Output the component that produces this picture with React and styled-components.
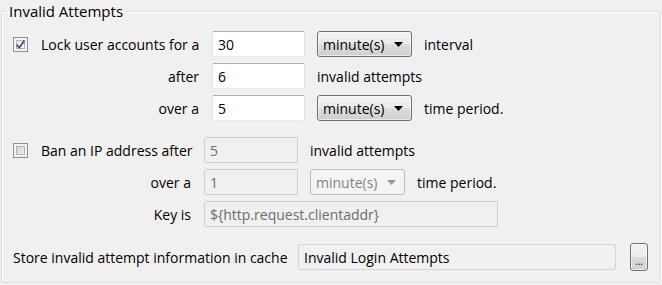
import React from 'react'
import styled, { createGlobalStyle } from 'styled-components'

const GlobalStyle = createGlobalStyle`
	body {
		margin: 0;
		background: #f0f0f0;
		font-family: "Open Sans", "Noto Sans", sans-serif;
		font-size: 14px;
		color: #000;
	}
`

const Check = ({ checked }) => (
	<CheckBox $checked={checked}>
		{checked && (
			<svg width="15" height="15" viewBox="0 0 15 15">
				<path d="M3.6 7.6 L6.2 10.8 L11.4 3.6" fill="none" stroke="#40569a" strokeWidth="1.8" strokeLinejoin="round" />
			</svg>
		)}
	</CheckBox>
)

const Dropdown = ({ disabled }) => (
	<Select $disabled={disabled}>
		<span>minute(s)</span>
		<svg width="9" height="5" viewBox="0 0 9 5">
			<path d="M0 0 H9 L4.5 5 Z" fill={disabled ? '#9a9a9a' : '#000'} />
		</svg>
	</Select>
)

const App = () => {
	return (
		<>
			<GlobalStyle />
			<Group>
				<Legend>Invalid Attempts</Legend>
				<Body>
					<LockGrid>
						<CheckLabel>
							<Check checked />
							Lock user accounts for a
						</CheckLabel>
						<Field defaultValue="30" />
						<Dropdown />
						<Text>interval</Text>

						<RightLabel>after</RightLabel>
						<Field defaultValue="6" />
						<Text $span>invalid attempts</Text>

						<RightLabel>over a</RightLabel>
						<Field defaultValue="5" />
						<Dropdown />
						<Text>time period.</Text>
					</LockGrid>

					<BanGrid>
						<CheckLabel>
							<Check />
							Ban an IP address after
						</CheckLabel>
						<Field defaultValue="5" disabled />
						<Text $span>invalid attempts</Text>

						<RightLabel>over a</RightLabel>
						<Field defaultValue="1" disabled />
						<Dropdown disabled />
						<Text>time period.</Text>

						<RightLabel>Key is</RightLabel>
						<KeyField defaultValue="${http.request.clientaddr}" disabled />
					</BanGrid>

					<CacheRow>
						<Text>Store invalid attempt information in cache</Text>
						<Field defaultValue="Invalid Login Attempts" readOnly />
						<BrowseButton>...</BrowseButton>
					</CacheRow>
				</Body>
			</Group>
		</>
	)
}

export default App

const Group = styled.fieldset`
	margin: 1px 1px 0;
	padding: 10px 0 11px;
	border: 1px solid #d5dfe5;
	border-radius: 3px;
	box-shadow: inset 1px 1px 0 #fff, 1px 1px 0 #fff;
	min-width: 0;
`

const Legend = styled.legend`
	margin-left: 5px;
	padding: 0 2px;
	line-height: 20px;
	font-size: 15px;
`

const Body = styled.div`
	padding: 0 11px;
`

const LockGrid = styled.div`
	display: grid;
	grid-template-columns: 187px 93px 95px auto;
	grid-auto-rows: 26px;
	column-gap: 12px;
	row-gap: 6px;
	align-items: center;
`

const BanGrid = styled(LockGrid)`
	margin-top: 16px;
	grid-template-columns: 179px 94px 95px auto;
`

const CacheRow = styled.div`
	margin-top: 16px;
	display: grid;
	grid-template-columns: 273px 318px 20px;
	column-gap: 12px;
	height: 28px;
	align-items: center;
`

const Text = styled.span`
	white-space: nowrap;
	grid-column: ${p => (p.$span ? 'span 2' : 'auto')};
`

const RightLabel = styled.span`
	justify-self: end;
	padding-right: 1px;
	white-space: nowrap;
`

const CheckLabel = styled.label`
	display: flex;
	align-items: center;
	gap: 13px;
	white-space: nowrap;
`

const CheckBox = styled.span`
	box-sizing: border-box;
	width: 15px;
	height: 15px;
	border: 1px solid #8e8f8f;
	background: ${p => (p.$checked
		? 'linear-gradient(135deg, #e9e9e9, #fdfdfd)'
		: 'linear-gradient(135deg, #cdcdcd, #f7f7f7)')};
	box-shadow: inset 0 0 0 2px #f4f4f4, inset 0 0 0 3px #b4b4b4;
	position: relative;
	flex: none;

	svg {
		position: absolute;
		left: -1px;
		top: -1px;
	}
`

const Field = styled.input`
	box-sizing: border-box;
	width: 100%;
	height: 26px;
	margin: 0;
	padding: 0 5px;
	border: 1px solid;
	border-color: #abadb3 #dbdfe6 #e3e9ef #e2e3ea;
	border-radius: 2px;
	background: #fff;
	font: inherit;
	color: #000;
	outline: none;

	&:disabled {
		background: #f0f0f0;
		border-color: #cfcfcf;
		color: #6d6d6d;
	}

	&[readonly] {
		background: #f0f0f0;
		border-color: #d4d4d4;
	}
`

const KeyField = styled(Field)`
	grid-column: span 3;
	width: 294px;
`

const Select = styled.div`
	box-sizing: border-box;
	height: 26px;
	display: flex;
	align-items: center;
	justify-content: space-between;
	padding: 0 8px 0 5px;
	border: 1px solid ${p => (p.$disabled ? '#bcbcbc' : '#707070')};
	border-radius: 3px;
	background: ${p => (p.$disabled
		? '#f4f4f4'
		: 'linear-gradient(#f2f2f2 0%, #ebebeb 48%, #dddddd 52%, #cfcfcf 100%)')};
	box-shadow: ${p => (p.$disabled ? 'none' : 'inset 0 0 0 1px rgba(255,255,255,0.6)')};
	color: ${p => (p.$disabled ? '#838383' : '#000')};
	white-space: nowrap;
`

const BrowseButton = styled.button`
	justify-self: end;
	box-sizing: border-box;
	width: 18px;
	height: 28px;
	padding: 0 0 6px;
	display: flex;
	align-items: flex-end;
	justify-content: center;
	border: 1px solid #707070;
	border-radius: 3px;
	background: linear-gradient(#f2f2f2 0%, #ebebeb 48%, #dddddd 52%, #cfcfcf 100%);
	box-shadow: inset 0 0 0 1px rgba(255,255,255,0.6);
	font-family: inherit;
	font-size: 10px;
	line-height: 6px;
	color: #1a1a1a;
`
